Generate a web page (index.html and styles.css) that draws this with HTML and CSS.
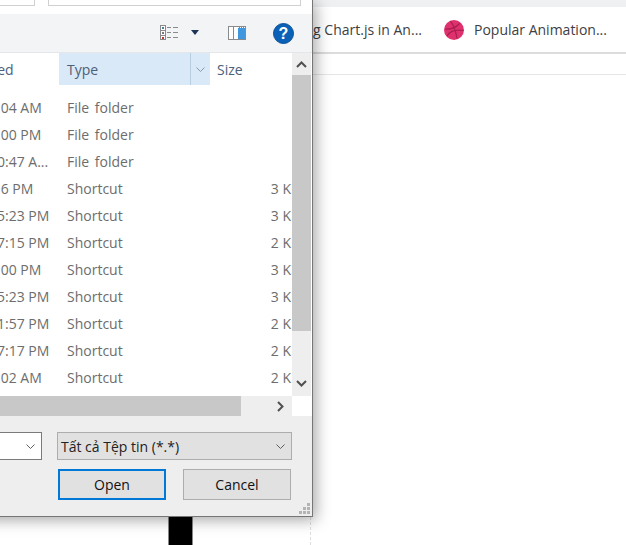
FILE: index.html
```html
<!DOCTYPE html>
<html>
<head>
  <meta name="viewport" content="width=device-width">
  <title>Open file</title>
  <link rel="stylesheet" href="styles.css">
</head>
<body>
<div class="browser">
  <div class="tabstrip"></div>
  <div class="bookmarks">
    <span class="mark mark-chart">Using Chart.js in An...</span>
    <span class="mark">
      <svg class="dribbble" width="20" height="20" viewBox="0 0 20 20">
        <circle cx="10" cy="10" r="10" fill="#e0316f"/>
        <path d="M6.500 1.200C9 4.500 11.500 9 13 18.500M1 9c5 .6 10-.6 14.500-5.500M3 16c2.500-4.500 7-7 16.500-5.500" fill="none" stroke="#a81f50" stroke-width="1.200"/>
      </svg>
      Popular Animation...
    </span>
  </div>
  <div class="content-top"></div>
</div>

<div class="blackbar"></div>
<div class="dashline"></div>

<div class="dialog">
  <div class="pathbar">
    <div class="pathbox path-addr"></div>
    <div class="pathbox path-search"></div>
  </div>

  <div class="toolbar">
    <svg class="tool-views" width="18" height="15" viewBox="0 0 18 15">
      <rect x="0.500" y="0.500" width="5" height="14" fill="#fff" stroke="#8a8a8a"/>
      <path d="M0 5.500h6M0 10.500h6" stroke="#8a8a8a"/>
      <rect x="2" y="2" width="2" height="2" fill="#4a7f9a"/>
      <rect x="2" y="7" width="2" height="2" fill="#7a7a7a"/>
      <rect x="2" y="12" width="2" height="2" fill="#c0392b"/>
      <path d="M7 2.500h4M13 2.500h5M7 7.500h4M13 7.500h5M7 12.500h4M13 12.500h5" stroke="#8a8a8a"/>
    </svg>
    <svg class="tool-caret" width="8" height="5" viewBox="0 0 8 5">
      <path d="M0 0h8L4 5z" fill="#1d3557"/>
    </svg>
    <svg class="tool-pane" width="18" height="14" viewBox="0 0 18 14">
      <rect x="0.500" y="0.500" width="17" height="13" fill="#fff" stroke="#8a8a8a"/>
      <rect x="10" y="2" width="7" height="11" fill="#3f97e0"/>
      <path d="M5.500 1v12" stroke="#8a8a8a"/>
      <path d="M11 1.500h6" stroke="#8a8a8a" stroke-dasharray="1 1"/>
    </svg>
    <span class="help">?</span>
  </div>

  <div class="listarea">
    <div class="filelist">
      <div class="header">
        <div class="col-date">Date modified</div>
        <div class="col-type hovered">
          Type
          <span class="sortdrop">
            <svg width="9" height="5" viewBox="0 0 9 5"><path d="M0.500 0.500l4 4 4-4" fill="none" stroke="#8a9aaa"/></svg>
          </span>
        </div>
        <div class="col-size">Size</div>
      </div>
      <div class="rows">
        <div class="row"><div class="col-date">4/21/2020 10:04 AM</div><div class="col-type">File folder</div><div class="col-size"></div></div>
        <div class="row"><div class="col-date">4/14/2020 12:00 PM</div><div class="col-type">File folder</div><div class="col-size"></div></div>
        <div class="row"><div class="col-date">10/27/2020 10:47 A...</div><div class="col-type">File folder</div><div class="col-size"></div></div>
        <div class="row"><div class="col-date">4/18/2020 4:56 PM</div><div class="col-type">Shortcut</div><div class="col-size">3 KB</div></div>
        <div class="row"><div class="col-date">11/22/2020 05:23 PM</div><div class="col-type">Shortcut</div><div class="col-size">3 KB</div></div>
        <div class="row"><div class="col-date">11/22/2020 07:15 PM</div><div class="col-type">Shortcut</div><div class="col-size">2 KB</div></div>
        <div class="row"><div class="col-date">4/14/2020 12:00 PM</div><div class="col-type">Shortcut</div><div class="col-size">3 KB</div></div>
        <div class="row"><div class="col-date">11/22/2020 05:23 PM</div><div class="col-type">Shortcut</div><div class="col-size">3 KB</div></div>
        <div class="row"><div class="col-date">11/19/2020 01:57 PM</div><div class="col-type">Shortcut</div><div class="col-size">2 KB</div></div>
        <div class="row"><div class="col-date">11/19/2020 07:17 PM</div><div class="col-type">Shortcut</div><div class="col-size">2 KB</div></div>
        <div class="row"><div class="col-date">11/21/2020 9:02 AM</div><div class="col-type">Shortcut</div><div class="col-size">2 KB</div></div>
      </div>
    </div>
    <div class="vscroll">
      <div class="arrow-box">
        <svg width="11" height="7" viewBox="0 0 11 7"><path d="M1 6l4.500-4.500L10 6" fill="none" stroke="#505050" stroke-width="2"/></svg>
      </div>
      <div class="vthumb"></div>
      <div class="vtrack">
        <svg width="11" height="7" viewBox="0 0 11 7"><path d="M1 1l4.500 4.500L10 1" fill="none" stroke="#505050" stroke-width="2"/></svg>
      </div>
    </div>
  </div>

  <div class="hscroll">
    <div class="hthumb"></div>
    <div class="htrack">
      <svg width="7" height="11" viewBox="0 0 7 11"><path d="M1 1l4.500 4.500L1 10" fill="none" stroke="#505050" stroke-width="2"/></svg>
    </div>
    <div class="corner"></div>
  </div>

  <div class="footer">
    <div class="selects">
      <div class="combo combo-name">
        <svg width="9" height="5" viewBox="0 0 9 5"><path d="M0.500 0.500l4 4 4-4" fill="none" stroke="#606060"/></svg>
      </div>
      <div class="combo combo-filter">
        <span>Tất cả Tệp tin (*.*)</span>
        <svg width="9" height="5" viewBox="0 0 9 5"><path d="M0.500 0.500l4 4 4-4" fill="none" stroke="#606060"/></svg>
      </div>
    </div>
    <div class="buttons">
      <button class="btn btn-open">Open</button>
      <button class="btn btn-cancel">Cancel</button>
    </div>
    <svg class="grip" width="11" height="11" viewBox="0 0 11 11">
      <path d="M8 0h3v3H8zM4 4h3v3H4zM8 4h3v3H8zM0 8h3v3H0zM4 8h3v3H4zM8 8h3v3H8z" fill="#b4b4b4"/>
    </svg>
  </div>
</div>
</body>
</html>
```

FILE: styles.css
```css
html, body { margin: 0; height: 100%; }
body {
    position: relative;
    overflow: hidden;
    background: #fff;
    font-family: "Open Sans", "Noto Sans", sans-serif;
    font-size: 14px;
}

/* browser behind the dialog */
.browser { display: flex; flex-direction: column; }
.tabstrip { height: 7px; background: #eff0f2; }
.bookmarks {
    height: 45px;
    display: flex;
    align-items: center;
    padding-left: 250px;
    gap: 22px;
    background: #fff;
    border-bottom: 2px solid #dcdcde;
    color: #3c4043;
}
.mark { display: flex; align-items: center; gap: 10px; white-space: nowrap; }
.mark-chart { width: 172px; justify-content: flex-end; }
.content-top { height: 20px; border-bottom: 1px solid #e6e6e6; }

.blackbar {
    position: absolute;
    left: 168px;
    top: 510px;
    width: 23px;
    height: 40px;
    background: #000;
    border-left: 1px solid #888;
    border-right: 1px solid #888;
}
.dashline {
    position: absolute;
    left: 310px;
    top: 517px;
    height: 28px;
    border-left: 1px dashed #ddd;
}

/* dialog, its left part is off screen */
.dialog {
    position: absolute;
    left: -200px;
    top: 0;
    width: 512px;
    height: 516px;
    display: flex;
    flex-direction: column;
    background: #f0f0f0;
    border-right: 1px solid #767676;
    border-bottom: 1px solid #767676;
    box-shadow: 3px 3px 14px rgba(0, 0, 0, 0.35);
}

.pathbar {
    height: 14px;
    flex: none;
    display: flex;
    gap: 13px;
    padding-left: 100px;
    background: #fff;
}
.pathbox { height: 5px; border: 1px solid #d0d0d0; border-top: 0; background: #fff; }
.path-addr { width: 133px; }
.path-search { width: 251px; }

.toolbar {
    height: 38px;
    flex: none;
    display: flex;
    align-items: center;
    padding-left: 360px;
    background: #f3f4f6;
    border-bottom: 1px solid #e4e6ea;
}
.tool-views { margin-top: -1px; }
.tool-caret { margin-left: 13px; margin-top: -1px; }
.tool-pane { margin-left: 29px; }
.help {
    width: 21px;
    height: 21px;
    margin-left: 27px;
    border-radius: 50%;
    background: #0a62b8;
    border: 1px solid #0a4f96;
    box-sizing: border-box;
    color: #fff;
    font-family: "Liberation Sans", sans-serif;
    font-weight: bold;
    font-size: 16px;
    line-height: 19px;
    text-align: center;
}

.listarea { height: 343px; flex: none; display: flex; background: #fff; }
.filelist { width: 492px; overflow: hidden; }
.header { height: 32px; display: flex; align-items: center; color: #4c607a; }
.header .col-date { text-indent: 10px; }
.rows { padding-top: 9px; color: #6d6d6d; }
.row { height: 27px; display: flex; align-items: center; }

.col-date {
    width: 148px;
    flex: none;
    margin-left: 111px;
    padding-right: 9px;
    box-sizing: border-box;
    white-space: nowrap;
    overflow: hidden;
}
.col-type { width: 151px; flex: none; padding-left: 8px; box-sizing: border-box; }
.row .col-type { word-spacing: 2px; }
.col-size { width: 90px; flex: none; padding-left: 7px; box-sizing: border-box; white-space: nowrap; }
.row .col-size { text-align: right; padding-left: 0; }

.hovered {
    align-self: stretch;
    display: flex;
    align-items: center;
    justify-content: space-between;
    padding-right: 0;
    background: #d9e9f7;
}
.sortdrop {
    width: 19px;
    align-self: stretch;
    display: flex;
    align-items: center;
    justify-content: center;
    border-left: 1px solid #b8cfe2;
}

.vscroll { width: 19px; flex: none; display: flex; flex-direction: column; background: #eee; }
.arrow-box { height: 22px; display: flex; align-items: center; justify-content: center; }
.vthumb { height: 256px; background: #c8c8c8; }
.vtrack { flex: 1; display: flex; align-items: flex-end; justify-content: center; padding-bottom: 9px; }

.hscroll { height: 20px; flex: none; display: flex; background: #fff; }
.hthumb { width: 441px; background: #c8c8c8; }
.htrack { width: 51px; display: flex; align-items: center; justify-content: center; padding-left: 27px; box-sizing: border-box; background: #eee; }
.corner { flex: 1; background: #fff; }

.footer {
    flex: 1;
    position: relative;
    display: flex;
    flex-direction: column;
    gap: 9px;
    padding-top: 16px;
    background: #eee;
    color: #000;
}
.selects { display: flex; gap: 15px; padding-left: 100px; }
.combo {
    height: 28px;
    box-sizing: border-box;
    display: flex;
    align-items: center;
    justify-content: space-between;
    padding: 0 6px 0 3px;
    border: 1px solid #7a7a7a;
    background: #fff;
}
.combo-name { width: 142px; justify-content: flex-end; }
.combo-filter { width: 235px; background: #e1e1e1; border-color: #adadad; color: #222; }

.buttons { display: flex; gap: 17px; padding-left: 258px; }
.btn {
    height: 31px;
    width: 108px;
    padding: 0;
    font: inherit;
    color: #111;
    background: #e1e1e1;
    border: 1px solid #adadad;
    box-sizing: border-box;
}
.btn-open { border: 2px solid #0078d7; }
.grip { position: absolute; right: 2px; bottom: 2px; }
```
